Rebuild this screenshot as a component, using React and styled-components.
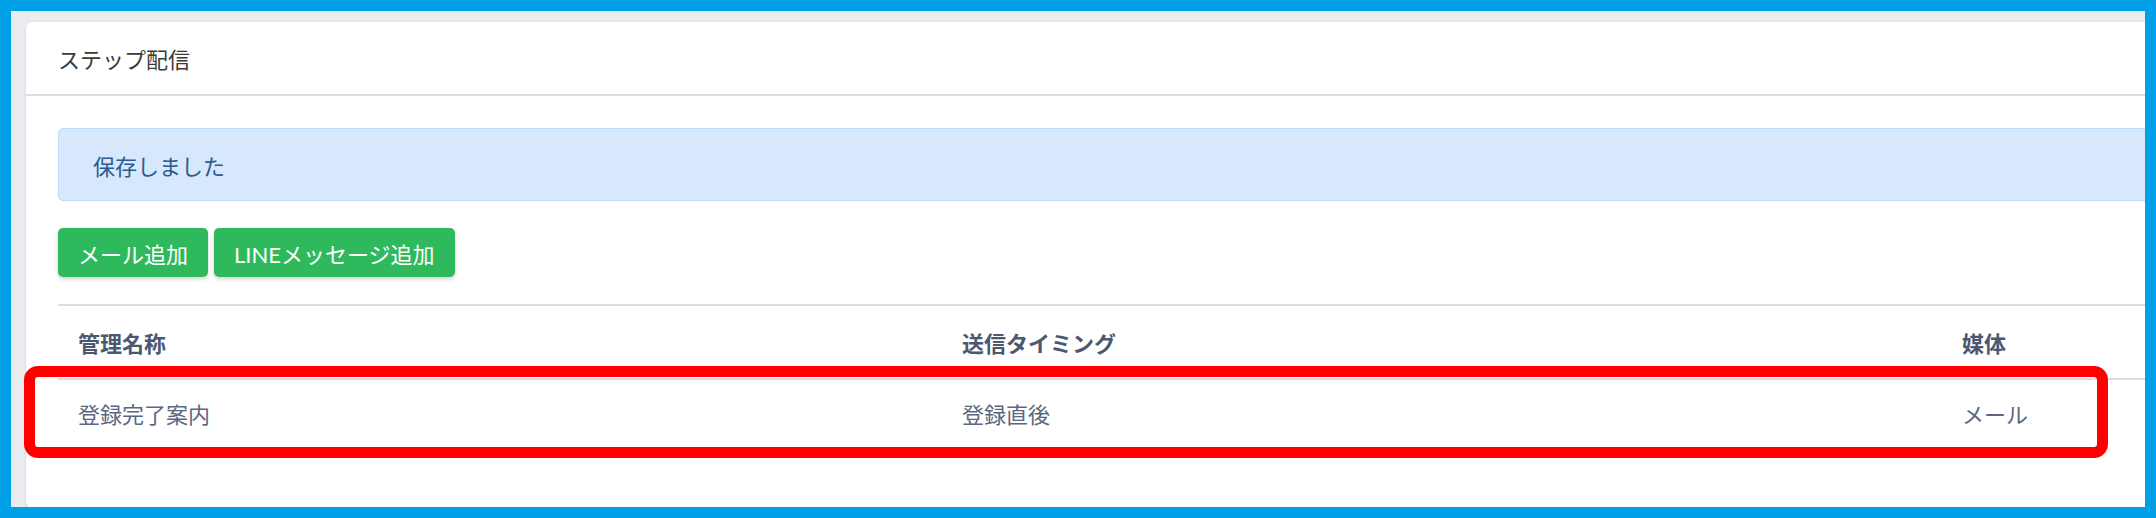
import React from 'react'
import styled, { createGlobalStyle } from 'styled-components'

const GlobalStyle = createGlobalStyle`
  html, body {
    margin: 0;
    padding: 0;
    background: #00a0e9;
  }
  body {
    font-family: Lato, "Noto Sans CJK JP", sans-serif;
  }
`

const Frame = styled.div`
  position: relative;
  box-sizing: border-box;
  width: 2156px;
  height: 518px;
  border: 11px solid #00a0e9;
  background: #ebecef;
  overflow: hidden;
  padding: 11px 0 0 15px;
`

const Card = styled.section`
  width: 2200px;
  height: 486px;
  background: #fff;
  border-radius: 6px;
  box-shadow: 0 1px 3px rgba(0, 0, 0, 0.12);
`

const CardHeader = styled.header`
  display: flex;
  align-items: center;
  height: 72px;
  padding-left: 32px;
  border-bottom: 2px solid #dcdce2;
  font-size: 22px;
  color: #3a3a3a;
`

const CardBody = styled.div`
  padding: 32px 0 0 32px;
`

const Alert = styled.div`
  box-sizing: border-box;
  display: flex;
  align-items: center;
  height: 73px;
  padding-left: 34px;
  background: #d7e8fd;
  border: 1px solid #bcdafc;
  border-radius: 5px;
  font-size: 22px;
  color: #2c5b8e;
`

const Actions = styled.div`
  display: flex;
  gap: 6px;
  margin: 27px 0;
`

const Button = styled.button`
  box-sizing: border-box;
  height: 49px;
  padding: 0 20px;
  border: none;
  border-radius: 5px;
  background: #2fb95d;
  color: #fff;
  font-family: inherit;
  font-size: 22px;
  box-shadow: 0 2px 4px rgba(0, 0, 0, 0.18);
`

const Table = styled.div`
  border-top: 2px solid #dcdce2;
`

const Row = styled.div`
  display: grid;
  grid-template-columns: 884px 1000px 1fr;
  align-items: center;
  height: ${props => (props.head ? '72px' : '66px')};
  border-bottom: ${props => (props.head ? '2px solid #dcdce2' : 'none')};
`

const Cell = styled.div`
  padding-left: 20px;
  font-size: 22px;
  font-weight: ${props => (props.head ? 700 : 400)};
  color: ${props => (props.head ? '#4b5870' : '#5b6780')};
`

const Highlight = styled.div`
  position: absolute;
  left: 13px;
  top: 355px;
  width: 2084px;
  height: 92px;
  box-sizing: border-box;
  border: 11px solid #ff0000;
  border-radius: 14px;
  pointer-events: none;
`

const columns = ['管理名称', '送信タイミング', '媒体']
const rows = [{ id: 1, name: '登録完了案内', timing: '登録直後', media: 'メール' }]

const App = () => {
  return (
    <>
      <GlobalStyle />
      <Frame>
        <Card>
          <CardHeader>ステップ配信</CardHeader>
          <CardBody>
            <Alert>保存しました</Alert>
            <Actions>
              <Button>メール追加</Button>
              <Button>LINEメッセージ追加</Button>
            </Actions>
            <Table>
              <Row head>
                {columns.map(col => (
                  <Cell head key={col}>{col}</Cell>
                ))}
              </Row>
              {rows.map(row => (
                <Row key={row.id}>
                  <Cell>{row.name}</Cell>
                  <Cell>{row.timing}</Cell>
                  <Cell>{row.media}</Cell>
                </Row>
              ))}
            </Table>
          </CardBody>
        </Card>
        <Highlight />
      </Frame>
    </>
  )
}

export default App
